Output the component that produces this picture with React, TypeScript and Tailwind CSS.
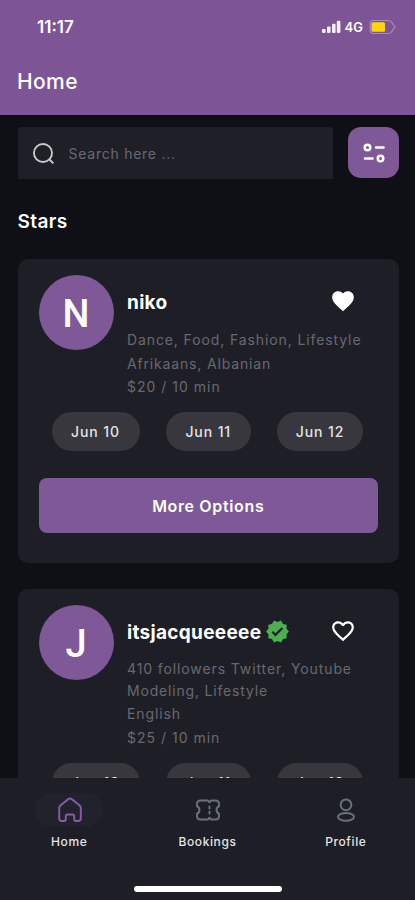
import { MdFavorite, MdFavoriteBorder, MdVerified } from "react-icons/md";

type Star = {
  name: string;
  initial: string;
  verified?: boolean;
  liked?: boolean;
  tags: { text: string; className: string }[];
};

const stars: Star[] = [
  {
    name: "niko",
    initial: "N",
    liked: true,
    tags: [
      { text: "Dance, Food, Fashion, Lifestyle", className: "h-6 leading-6 tracking-[0.89px]" },
      { text: "Afrikaans, Albanian", className: "h-[23px] leading-[23px] tracking-[0.84px]" },
      { text: "$20 / 10 min", className: "h-[23px] leading-[23px] tracking-[1px]" },
    ],
  },
  {
    name: "itsjacqueeeee",
    initial: "J",
    verified: true,
    tags: [
      { text: "410 followers Twitter, Youtube", className: "h-[22px] leading-[22px] tracking-[0.89px]" },
      { text: "Modeling, Lifestyle", className: "h-[22px] leading-[22px] tracking-[0.82px]" },
      { text: "English", className: "h-6 leading-6 tracking-[0.9px]" },
      { text: "$25 / 10 min", className: "h-[23px] leading-[23px] tracking-[1px]" },
    ],
  },
];

function StatusBar() {
  return (
    <div className="flex h-[54px] items-center justify-between pl-[37px] pr-[18px]">
      <span className="pt-0.5 text-[17px] font-semibold">11:17</span>
      <div className="flex items-center">
        <svg width="19" height="14" viewBox="0 0 19 14" fill="#f3eef7">
          <rect x="0" y="9" width="3.6" height="4" rx="1" />
          <rect x="5" y="6.5" width="3.6" height="6.5" rx="1" />
          <rect x="10" y="3.8" width="3.6" height="9.2" rx="1" />
          <rect x="14.8" y="0.8" width="3.6" height="12.2" rx="1" />
        </svg>
        <span className="ml-1 mt-0.5 text-[13px] font-semibold">4G</span>
        <svg className="ml-1.5" width="28" height="16" viewBox="0 0 28 16" fill="none">
          <path
            d="M4 1.5h15.5c1.3 0 2.2.5 3 1.5l3.4 5-3.4 5c-.8 1-1.7 1.5-3 1.5H4A2.8 2.8 0 0 1 1.2 11.7V4.3A2.8 2.8 0 0 1 4 1.5Z"
            stroke="#a58cb9"
            strokeWidth="1.2"
          />
          <rect x="2.5" y="3.2" width="13.5" height="9.6" rx="1.5" fill="#ffd60a" />
        </svg>
      </div>
    </div>
  );
}

function SearchRow() {
  return (
    <div className="flex justify-between">
      <div className="flex h-[52px] w-[315px] items-center rounded-t bg-[#1f2027] pl-[15px]">
        <svg width="21" height="21" viewBox="0 0 20 20" fill="none" stroke="#c9c9cc" strokeWidth="1.8">
          <circle cx="9.5" cy="9.5" r="8.6" />
          <path d="M15.6 15.6 18.8 18.8" strokeLinecap="round" />
        </svg>
        <span className="ml-[15px] text-[14px] tracking-[0.75px] text-[#686970]">Search here ...</span>
      </div>
      <button className="flex size-[51px] items-center justify-center rounded-[13px] bg-[#7e5897]">
        <svg width="24" height="24" viewBox="0 0 24 24" fill="none" stroke="white" strokeWidth="2.5">
          <circle cx="5.5" cy="6.5" r="2.8" />
          <path d="M14 6.5h7.5" strokeLinecap="round" />
          <circle cx="18.5" cy="17.5" r="2.8" />
          <path d="M3 17.5h7.5" strokeLinecap="round" />
        </svg>
      </button>
    </div>
  );
}

function StarCard({ star }: { star: Star }) {
  return (
    <article className="rounded-[10px] bg-[#1e1f26] px-[21px] pb-[30px] pt-4">
      <div className="flex">
        <div className="flex size-[75px] shrink-0 items-center justify-center rounded-full bg-[#7e5897] pt-1 font-['Roboto',sans-serif] text-[38px] font-medium">
          {star.initial}
        </div>
        <div className="ml-[13.5px] min-w-0 flex-1">
          <div className="flex h-[53px] items-center">
            <h3 className="pt-[3px] text-[19px] font-bold tracking-[0.3px]">{star.name}</h3>
            {star.verified && <MdVerified className="ml-1 size-[25px] text-[#4caf50]" />}
            <span className="mb-0.5 ml-auto mr-[22px]">
              {star.liked ? <MdFavorite className="size-[26px]" /> : <MdFavoriteBorder className="size-[26px]" />}
            </span>
          </div>
          <div className="text-[14px] text-[#686970]">
            {star.tags.map((tag) => (
              <p key={tag.text} className={`whitespace-nowrap ${tag.className}`}>
                {tag.text}
              </p>
            ))}
          </div>
        </div>
      </div>
      <div className="mt-[14px] flex justify-between pl-[13px] pr-[15px] text-[14px] font-medium tracking-[0.9px] text-[#e4e4e6]">
        <span className="flex h-[39px] w-[88px] items-center justify-center rounded-full bg-[#37373d]">Jun 10</span>
        <span className="flex h-[39px] w-[85px] items-center justify-center rounded-full bg-[#37373d]">Jun 11</span>
        <span className="flex h-[39px] w-[86px] items-center justify-center rounded-full bg-[#37373d]">Jun 12</span>
      </div>
      <button className="mt-[27px] h-[55px] w-full rounded-lg bg-[#7e5897] text-[16px] font-semibold tracking-[0.65px]">
        More Options
      </button>
    </article>
  );
}

function HomeIcon() {
  return (
    <svg width="26" height="26" viewBox="0 0 26 26" fill="none" stroke="#8a5ca8" strokeWidth="1.9" strokeLinejoin="round">
      <path d="M2.2 11c0-1.2.4-2 1.4-2.800l7.200-5.800a3.500 3.500 0 0 1 4.400 0l7.200 5.800c1 .8 1.400 1.600 1.400 2.800v10.200a2.800 2.800 0 0 1-2.800 2.800h-1.800c-1.400 0-2-.7-2-2v-2.600c0-1.200-.7-1.900-1.900-1.900h-4.600c-1.200 0-1.900.7-1.900 1.900V22c0 1.300-.6 2-2 2H5a2.800 2.800 0 0 1-2.800-2.800Z" />
    </svg>
  );
}

function TicketIcon() {
  return (
    <svg width="26" height="22" viewBox="0 0 26 22" fill="none" stroke="#66717c" strokeWidth="2" strokeLinejoin="round">
      <path d="M5.5 1.5h7.300l1.700 1.800 1.700-1.800h4.300c2.400 0 3.500 1.100 3.500 3.500v2.200c-1.600.5-2.400 1.900-2.400 3.800s.8 3.300 2.400 3.800V17c0 2.400-1.100 3.500-3.500 3.500h-4.300l-1.700-1.800-1.700 1.800H5.500C3.100 20.500 2 19.400 2 17v-2.200c1.600-.5 2.400-1.900 2.400-3.800S3.600 7.700 2 7.200V5c0-2.400 1.100-3.500 3.500-3.500Z" />
      <path d="M14.500 7.500v2M14.500 12.500v2" strokeLinecap="round" />
    </svg>
  );
}

function ProfileIcon() {
  return (
    <svg width="20" height="24" viewBox="0 0 20 24" fill="none" stroke="#66717c" strokeWidth="2">
      <circle cx="10" cy="6.8" r="5.4" />
      <ellipse cx="10" cy="18.8" rx="8" ry="3.9" />
    </svg>
  );
}

const tabs = [
  { label: "Home", icon: <HomeIcon />, active: true },
  { label: "Bookings", icon: <TicketIcon />, active: false },
  { label: "Profile", icon: <ProfileIcon />, active: false },
];

function BottomNav() {
  return (
    <nav className="flex h-[122px] shrink-0 flex-col justify-between bg-[#1e1f26] pb-2 pt-[15px]">
      <div className="grid grid-cols-3">
        {tabs.map((tab) => (
          <div key={tab.label} className="flex flex-col items-center">
            <div
              className={`flex h-[34px] w-[68px] items-center justify-center rounded-full pl-px ${tab.active ? "bg-[#22222d]" : ""}`}
            >
              {tab.icon}
            </div>
            <span className="mt-[5px] text-[12px] font-medium leading-5 tracking-[0.6px] text-[#e4e4e6]">{tab.label}</span>
          </div>
        ))}
      </div>
      <div className="mx-auto h-1.5 w-[148px] rounded-full bg-white" />
    </nav>
  );
}

export default function App() {
  return (
    <div className="flex h-[900px] w-[415px] flex-col overflow-hidden bg-[#0f1015] font-['Inter',sans-serif] text-white">
      <header className="h-[115px] shrink-0 bg-[#7d5596]">
        <StatusBar />
        <h1 className="pl-[17px] pt-3 text-[21px] font-medium leading-8 tracking-[0.4px]">Home</h1>
      </header>
      <main className="min-h-0 flex-1 overflow-hidden pl-[17.5px] pr-4 pt-3">
        <SearchRow />
        <h2 className="mt-[29px] text-[19px] font-semibold leading-7 tracking-[0.4px]">Stars</h2>
        <div className="mt-[23px] flex flex-col gap-[26px]">
          {stars.map((star) => (
            <StarCard key={star.name} star={star} />
          ))}
        </div>
      </main>
      <BottomNav />
    </div>
  );
}
